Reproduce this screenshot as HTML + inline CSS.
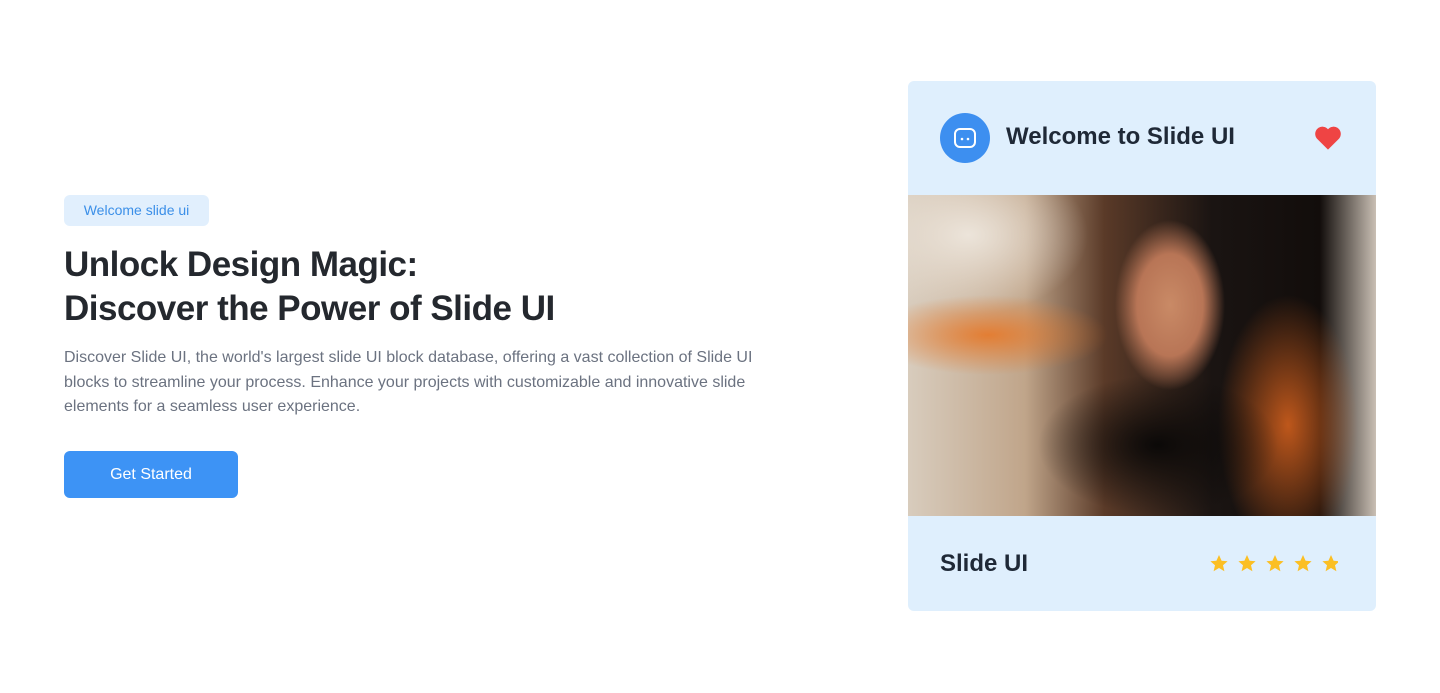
<!DOCTYPE html>
<html><head><style>
*{margin:0;padding:0;box-sizing:border-box}
body{width:1440px;height:693px;background:#fff;font-family:"Liberation Sans",Arial,sans-serif;position:relative;overflow:hidden}
.badge{position:absolute;left:64px;top:195px;width:145px;height:31px;background:#e1effd;border-radius:6px;color:#3b8fe8;font-size:14px;line-height:31px;text-align:center}
h1{position:absolute;left:64px;top:243px;font-size:35px;line-height:44px;font-weight:600;color:#24282e;letter-spacing:-0.5px}
p{position:absolute;left:64px;top:346px;width:735px;font-size:16px;line-height:24.5px;color:#6b7280}
.btn{position:absolute;left:64px;top:451px;width:174px;height:47px;background:#3d93f5;border-radius:6px;color:#fff;font-size:16px;line-height:47px;text-align:center}
.card{position:absolute;left:908px;top:81px;width:468px;height:530px;background:#dfeffd;border-radius:6px;overflow:hidden}
.av{position:absolute;left:32px;top:32px;width:50px;height:50px;border-radius:50%;background:#3d8ff0}
.t{position:absolute;left:98px;top:42px;font-size:24px;font-weight:600;color:#1f2937}
.img{position:absolute;left:0;top:114px;width:468px;height:321px;
background:
radial-gradient(ellipse 55px 85px at 262px 110px,#c98a66 0%,#b87556 60%,rgba(150,90,60,0) 100%),
radial-gradient(ellipse 120px 70px at 250px 250px,#0b0908 0%,rgba(10,8,8,0) 100%),
radial-gradient(ellipse 120px 40px at 80px 140px,rgba(230,120,40,.9),rgba(230,120,40,0)),
radial-gradient(ellipse 70px 130px at 380px 230px,rgba(220,100,30,.85),rgba(220,100,30,0)),
radial-gradient(ellipse 120px 80px at 60px 40px,#ece4da,rgba(236,228,218,0)),
linear-gradient(90deg,#d8ccbd 0%,#c0a58a 25%,#5a3a28 42%,#1a1412 65%,#120d0b 88%,#c9bfb4 100%)}
.s{position:absolute;left:32px;top:469px;font-size:24px;font-weight:600;color:#1f2937}
</style></head><body>
<div class="badge">Welcome slide ui</div>
<h1>Unlock Design Magic:<br>Discover the Power of Slide UI</h1>
<p>Discover Slide UI, the world's largest slide UI block database, offering a vast collection of Slide UI blocks to streamline your process. Enhance your projects with customizable and innovative slide elements for a seamless user experience.</p>
<div class="btn">Get Started</div>
<div class="card">
<div class="av"><svg width="50" height="50" viewBox="0 0 50 50"><rect x="15" y="16" width="20" height="18" rx="5" fill="none" stroke="#fff" stroke-width="2"/><circle cx="22" cy="26" r="1.3" fill="#fff"/><circle cx="28" cy="26" r="1.3" fill="#fff"/></svg></div>
<div class="t">Welcome to Slide UI</div>
<svg style="position:absolute;left:406px;top:44px" width="28" height="26" viewBox="0 0 24 22"><path d="M12 21 L2.5 11.5 A5.5 5.5 0 0 1 12 3.5 A5.5 5.5 0 0 1 21.5 11.5 Z" fill="#ef4444"/></svg>
<div class="img"></div>
<div class="s">Slide UI</div>
<svg style="position:absolute;left:300px;top:472px" width="130" height="22" viewBox="0 0 130 22">
<defs><path id="st" d="M0 -9 L2.6 -3.2 L8.6 -2.8 L4 1.2 L5.4 7.3 L0 4 L-5.4 7.3 L-4 1.2 L-8.6 -2.8 L-2.6 -3.2 Z" fill="#fbbf24"/></defs>
<use href="#st" x="11" y="11"/><use href="#st" x="39" y="11"/><use href="#st" x="67" y="11"/><use href="#st" x="95" y="11"/><use href="#st" x="123" y="11"/>
</svg>
</div>
</body></html>
